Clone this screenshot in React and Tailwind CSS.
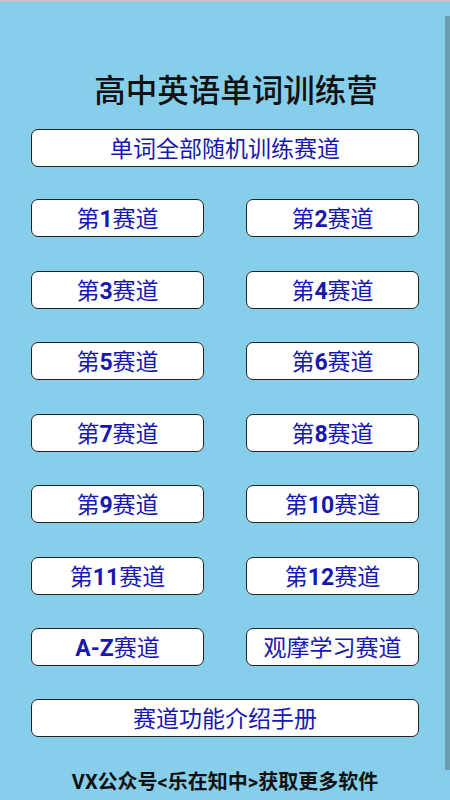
const tracks = [
  '第1赛道', '第2赛道', '第3赛道', '第4赛道', '第5赛道', '第6赛道',
  '第7赛道', '第8赛道', '第9赛道', '第10赛道', '第11赛道', '第12赛道',
  'A-Z赛道', '观摩学习赛道',
];

const font = { fontFamily: 'Roboto, "Noto Sans CJK SC", sans-serif' };

// latin parts (digits, A-Z) render bold, like the phone's fallback
function Label({ text }) {
  const parts = text.split(/([0-9A-Z-]+)/).filter(Boolean);
  return parts.map((p, i) =>
    /^[0-9A-Z-]+$/.test(p) ? (
      <span key={i} className="font-bold">{p}</span>
    ) : (
      <span key={i}>{p}</span>
    )
  );
}

function TrackButton({ text }) {
  return (
    <button className="h-[38px] w-full pt-[3px] rounded-[7px] border-[1.5px] border-[#222] bg-white text-[23px] font-normal leading-none text-[#1818b0] flex items-center justify-center">
      <Label text={text} />
    </button>
  );
}

export default function App() {
  return (
    <div
      className="relative w-[450px] h-[800px] overflow-hidden bg-[#87ceeb] border-t-2 border-[#c3c6c8]"
      style={font}
    >
      <div className="flex flex-col px-[31px] w-[450px]">
        <h1 className="mt-[70px] h-[40px] flex items-center justify-center pl-[22px] text-[31.5px] font-medium text-[#111] leading-none">
          高中英语单词训练营
        </h1>

        <div className="mt-[17px]">
          <TrackButton text="单词全部随机训练赛道" />
        </div>

        <div className="mt-[32px] grid grid-cols-2 gap-x-[42px] gap-y-[33.5px]">
          {tracks.map((t) => (
            <TrackButton key={t} text={t} />
          ))}
        </div>

        <div className="mt-[33px]">
          <TrackButton text="赛道功能介绍手册" />
        </div>

        <p className="mt-[35px] text-center text-[20px] font-bold text-[#111] leading-none">
          VX公众号&lt;乐在知中&gt;获取更多软件
        </p>
      </div>

      {/* scrollbar strip on the right */}
      <div className="absolute right-0 top-[14px] w-[5px] h-[754px] bg-[#6a9db0]" />
    </div>
  );
}
